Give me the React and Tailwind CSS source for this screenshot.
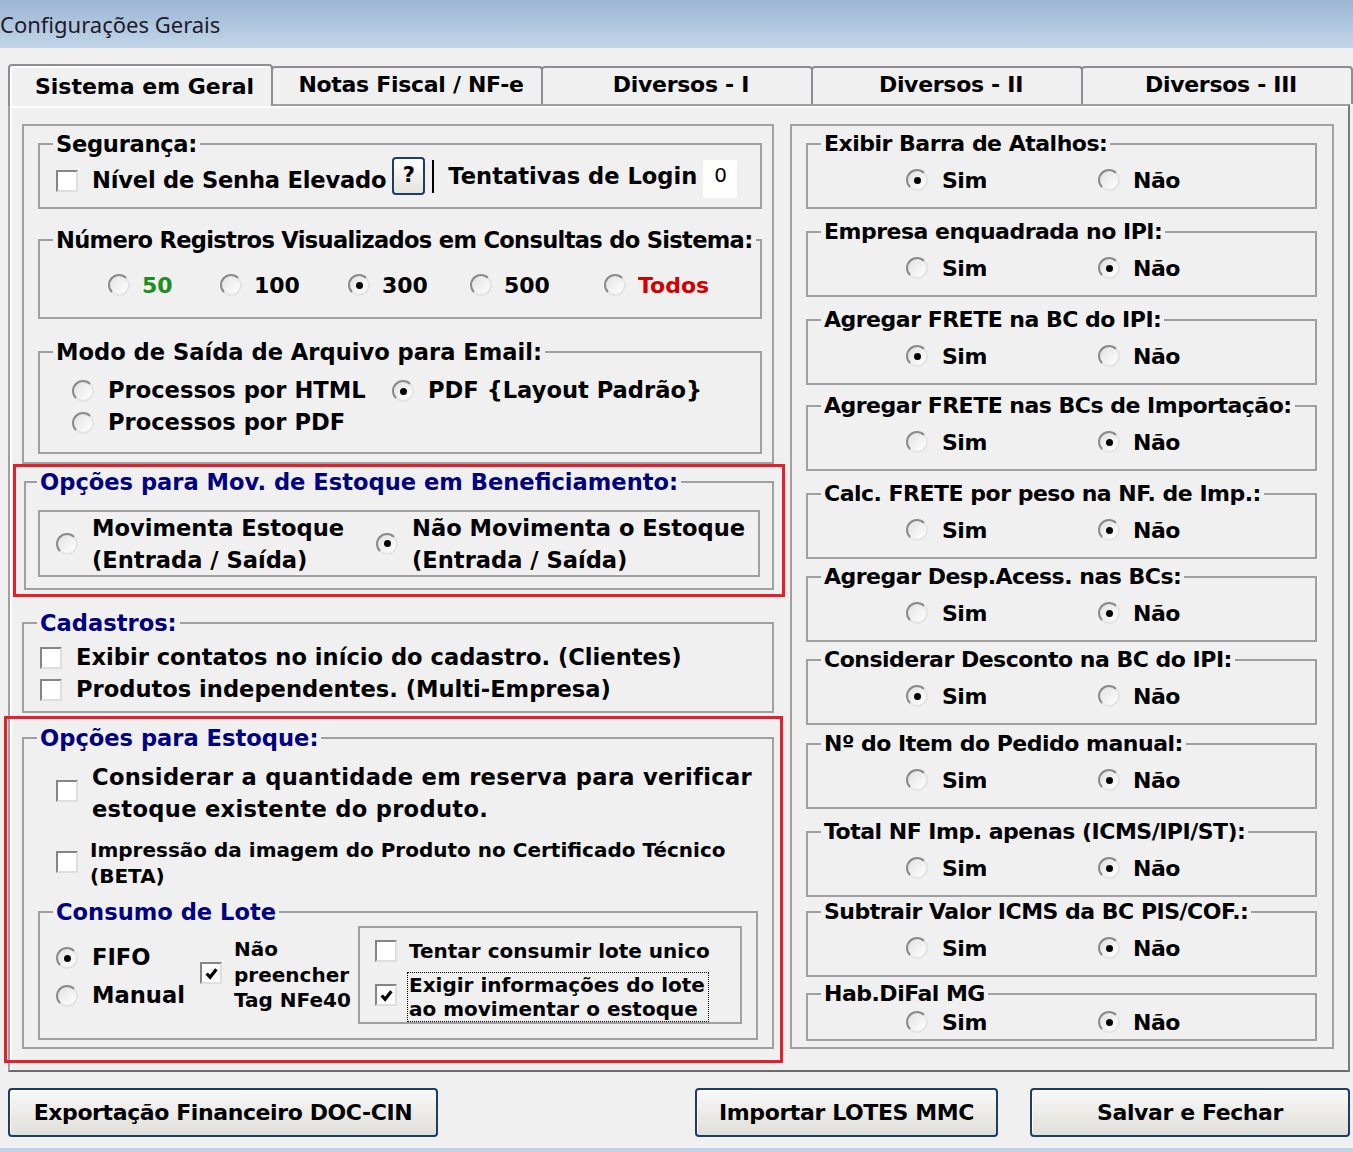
import React from "react";

// Windows-style controls
const Radio = ({ on }) => (
  <span className="flex h-[22px] w-[22px] shrink-0 items-center justify-center rounded-full border-2 border-t-[#8a8a8a] border-l-[#8a8a8a] border-r-[#e4e4e4] border-b-[#e4e4e4] bg-gradient-to-br from-[#e2e2e2] to-white">
    {on && <span className="h-[7px] w-[7px] rounded-full bg-black" />}
  </span>
);

const Check = ({ on }) => (
  <span className="flex h-[22px] w-[22px] shrink-0 items-center justify-center border-2 border-t-[#858585] border-l-[#858585] border-r-[#dedede] border-b-[#dedede] bg-white">
    {on && (
      <svg viewBox="0 0 12 12" className="h-[13px] w-[13px]">
        <path d="M1.5 6l3.2 3.4L10.5 2" fill="none" stroke="#000" strokeWidth="3" />
      </svg>
    )}
  </span>
);

const Legend = ({ children, className = "" }) => (
  <legend className={`whitespace-nowrap px-[3px] leading-[28px] ${className}`}>{children}</legend>
);

const rightGroups = [
  { t: "Exibir Barra de Atalhos:", v: "s", mt: "" },
  { t: "Empresa enquadrada no IPI:", v: "n", mt: "mt-[9px]" },
  { t: "Agregar FRETE na BC do IPI:", v: "s", mt: "mt-[9px]" },
  { t: "Agregar FRETE nas BCs de Importação:", v: "n", mt: "mt-[7px]" },
  { t: "Calc. FRETE por peso na NF. de Imp.:", v: "n", mt: "mt-[9px]" },
  { t: "Agregar Desp.Acess. nas BCs:", v: "n", mt: "mt-[4px]" },
  { t: "Considerar Desconto na BC do IPI:", v: "s", mt: "mt-[4px]" },
  { t: "Nº do Item do Pedido manual:", v: "n", mt: "mt-[5px]" },
  { t: "Total NF Imp. apenas (ICMS/IPI/ST):", v: "n", mt: "mt-[9px]" },
  { t: "Subtrair Valor ICMS da BC PIS/COF.:", v: "n", mt: "mt-[1px]" },
];

const registros = [
  { label: "50", w: "w-[112px]", color: "text-[#1f8c1f]" },
  { label: "100", w: "w-[128px]", color: "" },
  { label: "300", w: "w-[122px]", color: "", on: true },
  { label: "500", w: "w-[134px]", color: "" },
  { label: "Todos", w: "", color: "text-[#d40000]" },
];

const SimNao = ({ v }) => (
  <div className="flex h-[28px] items-center pl-[98px]">
    <div className="flex w-[192px] items-center gap-[14px]">
      <Radio on={v === "s"} />
      <span>Sim</span>
    </div>
    <div className="flex items-center gap-[13px]">
      <Radio on={v === "n"} />
      <span>Não</span>
    </div>
  </div>
);

const tabs = ["Notas Fiscal / NF-e", "Diversos - I", "Diversos - II", "Diversos - III"];

const btn =
  "flex h-[49px] items-center justify-center rounded-[4px] border-2 border-[#1b3d66] bg-gradient-to-b from-[#f8f8f8] to-[#e0dfd8] text-[22px] font-bold tracking-[-0.4px] shadow-[inset_1px_1px_0_#fff]";

export default function App() {
  return (
    <div className="relative h-[1152px] w-[1353px] overflow-hidden bg-[#f0f0f0] font-['DejaVu_Sans',sans-serif] text-black">
      {/* title bar */}
      <div className="flex h-[48px] items-center bg-gradient-to-b from-[#9cb6d2] to-[#c2d5ea] font-['Noto_Sans',sans-serif] text-[22px] text-[#1b1b2b]">
        Configurações Gerais
      </div>

      {/* tabs */}
      <div className="mt-[16px] flex h-[40px] items-end font-bold text-[22px]">
        <div className="relative z-10 -mb-[2px] ml-[8px] flex h-[42px] w-[266px] justify-center rounded-t-[4px] border-2 border-b-0 border-[#8c8e94] bg-[#f0f0f0] pl-[8px] pt-[7px] leading-[28px] shadow-[inset_2px_2px_0_#fff]">
          Sistema em Geral
        </div>
        {tabs.map((t) => (
          <div
            key={t}
            className="-ml-[2px] flex h-[38px] w-[272px] shrink-0 justify-center rounded-t-[4px] border-2 border-b-0 border-[#8c8e94] bg-[#f0f0f0] pl-[8px] pt-[3px] leading-[28px] tracking-[-0.3px]"
          >
            {t}
          </div>
        ))}
      </div>

      {/* tab panel */}
      <div className="ml-[8px] flex h-[968px] w-[1342px] gap-[15px] border-2 border-[#a0a0a0] border-r-[#7a7a7a] border-b-[#6b6b6b] bg-[#f0f0f0] pl-[12px] pt-[18px] text-[22px] font-bold shadow-[inset_2px_2px_0_#fff]">
        {/* left column */}
        <div className="flex w-[753px] flex-col text-[22.6px]">
          <div className="w-[752px] border-2 border-[#a0a0a0] pb-[8px] pl-[14px] pr-[10px] pt-[4px]">
            <fieldset className="border-2 border-[#a0a0a0]">
              <Legend className="ml-[13px] tracking-[-0.3px]">Segurança:</Legend>
              <div className="flex h-[49px] items-start pb-[9px] pl-[16px]">
                <span className="mt-[12px]">
                  <Check />
                </span>
                <span className="ml-[14px] mt-[8px] leading-[28px] tracking-[-0.2px]">Nível de Senha Elevado</span>
                <span className="ml-[6px] -mt-[1px] flex h-[38px] w-[33px] items-center justify-center rounded-[4px] border-2 border-[#1b3d66] bg-gradient-to-b from-white to-[#e4e3dc] text-[21px]">
                  ?
                </span>
                <span className="ml-[7px] mt-[2px] h-[33px] w-[2px] bg-black" />
                <span className="ml-[14px] mt-[4px] leading-[28px]">Tentativas de Login</span>
                <span className="ml-[6px] mt-[2px] flex h-[38px] w-[34px] items-start bg-white pl-[11px] pt-[3px] text-[20px] font-normal leading-[24px]">
                  0
                </span>
              </div>
            </fieldset>

            <fieldset className="mt-[17px] border-2 border-[#a0a0a0] pb-[18px] pt-[17px]">
              <Legend className="ml-[13px] tracking-[-0.7px]">Número Registros Visualizados em Consultas do Sistema:</Legend>
              <div className="flex h-[28px] items-center pl-[68px] text-[22px]">
                {registros.map((r) => (
                  <div key={r.label} className={`flex items-center gap-[12px] ${r.w}`}>
                    <Radio on={r.on} />
                    <span className={r.color}>{r.label}</span>
                  </div>
                ))}
              </div>
            </fieldset>

            <fieldset className="mt-[19px] border-2 border-[#a0a0a0] pb-[13px] pt-[9px]">
              <Legend className="ml-[13px]">Modo de Saída de Arquivo para Email:</Legend>
              <div className="flex h-[32px] items-center pl-[32px]">
                <div className="flex w-[320px] items-center gap-[14px]">
                  <Radio />
                  <span>Processos por HTML</span>
                </div>
                <div className="flex items-center gap-[14px]">
                  <Radio on />
                  <span>PDF {"{"}Layout Padrão{"}"}</span>
                </div>
              </div>
              <div className="flex h-[32px] items-center gap-[14px] pl-[32px]">
                <Radio />
                <span>Processos por PDF</span>
              </div>
            </fieldset>
          </div>

          <fieldset className="ml-[2px] mt-[4px] w-[750px] border-2 border-[#a0a0a0] pb-[11px] pt-[14px]">
            <Legend className="ml-[11px] text-[#000080]">Opções para Mov. de Estoque em Beneficiamento:</Legend>
            <div className="mx-[12px] flex h-[67px] items-center border-2 border-[#a0a0a0] pl-[16px] leading-[32px]">
              <div className="flex w-[320px] items-center gap-[14px]">
                <Radio />
                <span>
                  Movimenta Estoque
                  <br />
                  (Entrada / Saída)
                </span>
              </div>
              <div className="flex items-center gap-[14px]">
                <Radio on />
                <span>
                  Não Movimenta o Estoque
                  <br />
                  (Entrada / Saída)
                </span>
              </div>
            </div>
          </fieldset>

          <fieldset className="mt-[19px] w-[752px] border-2 border-[#a0a0a0] pb-[5px] pt-[5px]">
            <Legend className="ml-[13px] text-[#000080]">Cadastros:</Legend>
            <div className="flex h-[32px] items-center gap-[14px] pl-[16px]">
              <Check />
              <span>Exibir contatos no início do cadastro. (Clientes)</span>
            </div>
            <div className="flex h-[32px] items-center gap-[14px] pl-[16px]">
              <Check />
              <span>Produtos independentes. (Multi-Empresa)</span>
            </div>
          </fieldset>

          <fieldset className="mt-[11px] w-[752px] border-2 border-[#a0a0a0] pb-[7px] pt-[9px]">
            <Legend className="ml-[13px] text-[#000080]">Opções para Estoque:</Legend>
            <div className="flex items-start gap-[14px] pl-[32px]">
              <span className="mt-[19px]">
                <Check />
              </span>
              <span className="leading-[32px] tracking-[0.3px]">
                Considerar a quantidade em reserva para verificar
                <br />
                estoque existente do produto.
              </span>
            </div>
            <div className="mt-[12px] flex items-start gap-[12px] pl-[32px]">
              <span className="mt-[14px]">
                <Check />
              </span>
              <span className="text-[20px] leading-[26px]">
                Impressão da imagem do Produto no Certificado Técnico
                <br />
                (BETA)
              </span>
            </div>

            <fieldset className="mx-[14px] mt-[9px] border-2 border-[#a0a0a0] pb-[14px]">
              <Legend className="ml-[13px] text-[#000080]">Consumo de Lote</Legend>
              <div className="flex items-start">
                <div className="w-[160px] pl-[16px] pt-[13px]">
                  <div className="flex h-[38px] items-center gap-[14px]">
                    <Radio on />
                    <span>FIFO</span>
                  </div>
                  <div className="flex h-[38px] items-center gap-[14px]">
                    <Radio />
                    <span>Manual</span>
                  </div>
                </div>
                <div className="flex w-[158px] items-start gap-[12px]">
                  <span className="mt-[36px]">
                    <Check on />
                  </span>
                  <span className="mt-[11px] text-[20px] leading-[25.5px]">
                    Não
                    <br />
                    preencher
                    <br />
                    Tag NFe40
                  </span>
                </div>
                <div className="h-[98px] w-[384px] border-2 border-[#a0a0a0] pl-[15px] pt-[10px] text-[20px]">
                  <div className="flex h-[26px] items-center gap-[12px]">
                    <Check />
                    <span className="leading-[26px]">Tentar consumir lote unico</span>
                  </div>
                  <div className="flex items-start gap-[10px]">
                    <span className="mt-[20px]">
                      <Check on />
                    </span>
                    <span className="mt-[8px] border border-dotted border-black pl-[1px] pr-[3px] leading-[24px]">
                      Exigir informações do lote
                      <br />
                      ao movimentar o estoque
                    </span>
                  </div>
                </div>
              </div>
            </fieldset>
          </fieldset>
        </div>

        {/* right column */}
        <div className="h-[925px] w-[544px] border-2 border-[#a0a0a0] pl-[14px] pr-[15px] pt-[4px] tracking-[-0.5px]">
          {rightGroups.map((g) => (
            <fieldset key={g.t} className={`border-2 border-[#a0a0a0] pb-[13px] pt-[8px] ${g.mt}`}>
              <Legend className="ml-[13px]">{g.t}</Legend>
              <SimNao v={g.v} />
            </fieldset>
          ))}
          <fieldset className="mt-[3px] border-2 border-[#a0a0a0] pb-[3px]">
            <Legend className="ml-[13px]">Hab.DiFal MG</Legend>
            <SimNao v="n" />
          </fieldset>
        </div>
      </div>

      {/* buttons */}
      <div className="mt-[16px] flex">
        <div className={`ml-[8px] w-[430px] ${btn}`}>Exportação Financeiro DOC-CIN</div>
        <div className={`ml-[257px] w-[303px] ${btn}`}>Importar LOTES MMC</div>
        <div className={`ml-[32px] w-[320px] ${btn}`}>Salvar e Fechar</div>
      </div>
      <div className="absolute bottom-0 left-0 h-[4px] w-full bg-[#bfd1e6]" />

      {/* red annotation boxes */}
      <div className="pointer-events-none absolute left-[13px] top-[464px] h-[133px] w-[772px] border-[3px] border-[#e3212d]" />
      <div className="pointer-events-none absolute left-[4px] top-[716px] h-[347px] w-[779px] border-[3px] border-[#e3212d]" />
    </div>
  );
}
